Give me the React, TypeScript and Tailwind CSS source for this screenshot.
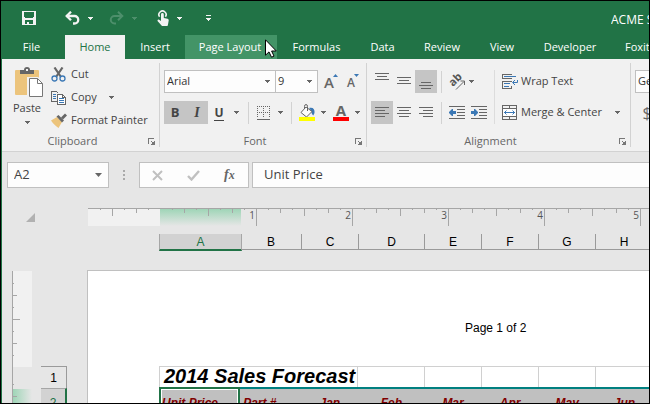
import React from 'react';
import clsx from 'clsx';

const tabs = [
  { name: 'File', width: 'w-[63px]' },
  { name: 'Home', width: 'w-[60px]' },
  { name: 'Insert', width: 'w-[60px]' },
  { name: 'Page Layout', width: 'w-[92px]' },
  { name: 'Formulas', width: 'w-[79px]' },
  { name: 'Data', width: 'w-[53px]' },
  { name: 'Review', width: 'w-[66px]' },
  { name: 'View', width: 'w-[54px]' },
  { name: 'Developer', width: 'w-[82px]' },
  { name: 'Foxit Reader', width: 'w-[94px]' },
];

const columns = [
  { letter: 'A', width: 'w-[81px]', heading: 'Unit Price' },
  { letter: 'B', width: 'w-[61px]', heading: 'Part #' },
  { letter: 'C', width: 'w-[57px]', heading: 'Jan' },
  { letter: 'D', width: 'w-[66px]', heading: 'Feb' },
  { letter: 'E', width: 'w-[57px]', heading: 'Mar' },
  { letter: 'F', width: 'w-[57px]', heading: 'Apr' },
  { letter: 'G', width: 'w-[57px]', heading: 'May' },
  { letter: 'H', width: 'w-[57px]', heading: 'Jun' },
];

const INCH = 96;

function Caret({ className = 'text-[#666]' }: { className?: string }) {
  return (
    <svg width="5" height="3" viewBox="0 0 5 3" className={clsx('shrink-0', className)} shapeRendering="crispEdges">
      <path d="M0 0h5v1H4v1H3v1H2V2H1V1H0z" fill="currentColor" />
    </svg>
  );
}

function Launcher() {
  return (
    <button aria-label="More options" className="absolute right-1 bottom-0.5">
      <svg width="7" height="7" viewBox="0 0 7 7" fill="none" stroke="#777" shapeRendering="crispEdges">
        <path d="M.5 6V.5H6M3 3l3 3" />
        <path d="M3 6.500h3.500V3" />
        <path d="M5 4h2v3H4z" fill="#777" stroke="none" />
      </svg>
    </button>
  );
}

function Group({ label, className, children }: { label: string; className?: string; children: React.ReactNode }) {
  return (
    <section
      aria-label={label}
      className={clsx('relative my-1 h-[84px] shrink-0 border-r border-[#d2d2d2]', className)}
    >
      {children}
      <div className="absolute right-4 bottom-0 left-0 h-3 text-center leading-3 text-[#666]">{label}</div>
      <Launcher />
    </section>
  );
}

function Separator() {
  return <div className="h-[22px] w-px shrink-0 bg-[#d2d2d2]" />;
}

function Combo({ label, value, className }: { label: string; value: string; className: string }) {
  return (
    <div className={clsx('relative h-[23px] shrink-0', className)}>
      <select
        aria-label={label}
        defaultValue={value}
        className="h-full w-full appearance-none border border-[#c0c0c0] bg-[#fdfdfd] pl-0.5 text-[#333]"
      >
        <option>{value}</option>
      </select>
      <Caret className="pointer-events-none absolute top-[10px] right-1.5 text-[#666]" />
    </div>
  );
}

function LinesIcon({ widths, align, top }: { widths: number[]; align: 'left' | 'center' | 'right'; top: number }) {
  return (
    <svg width="22" height="23" viewBox="0 0 22 23" shapeRendering="crispEdges" fill="#666">
      {widths.map((w, i) => (
        <rect
          key={i}
          x={align === 'left' ? 4 : align === 'right' ? 18 - w : 4 + (14 - w) / 2}
          y={top + i * 3}
          width={w}
          height="1"
        />
      ))}
    </svg>
  );
}

function IndentIcon({ increase }: { increase?: boolean }) {
  return (
    <svg width="16" height="13" viewBox="0 0 16 13" shapeRendering="crispEdges">
      <path d="M0 0h16v1H0zM8 3h8v1H8zM8 6h8v1H8zM8 9h8v1H8zM0 12h16v1H0z" fill="#666" />
      <path
        d={increase ? 'M0 5h3V3h1l3 3v1L4 10H3V8H0z' : 'M7 5H4V3H3L0 6v1l3 3h1V8h3z'}
        fill="#3b78b5"
        shapeRendering="auto"
      />
    </svg>
  );
}

function QuickAccess() {
  return (
    <div className="flex h-[34px] shrink-0 items-center bg-[#217346] pl-5 text-white">
      <button aria-label="Save">
        <svg width="14" height="14" viewBox="0 0 14 14" shapeRendering="crispEdges">
          <path
            fillRule="evenodd"
            fill="#f3f3f3"
            d="M0 0h14v14H0zM2 1v5h1v1h8V6h1V1zM3 9v4h2v-2h2v2h4V9z"
          />
        </svg>
      </button>
      <button aria-label="Undo" className="ml-[29px]">
        <svg width="15" height="14" viewBox="0 0 15 14" fill="none" stroke="#f3f3f3" strokeWidth="2.300">
          <path d="M1.500 5H9.500a3.600 3.600 0 0 1 0 7.500H8" />
          <path d="M6 .7 1.700 5 6 9.300" />
        </svg>
      </button>
      <button aria-label="Undo list" className="ml-2">
        <Caret className="text-[#f3f3f3]" />
      </button>
      <button aria-label="Redo" className="ml-4" disabled>
        <svg width="15" height="14" viewBox="0 0 15 14" fill="none" stroke="#4d8f6b" strokeWidth="2">
          <path d="M13.500 5H5.500a3.600 3.600 0 0 0 0 7.500h1.500" />
          <path d="M9 .7 13.300 5 9 9.300" />
        </svg>
      </button>
      <button aria-label="Redo list" className="ml-2" disabled>
        <Caret className="text-[#4d8f6b]" />
      </button>
      <button aria-label="Touch mode" className="ml-5">
        <svg width="12" height="16" viewBox="0 0 12 16">
          <path d="M2.600 6.800A3.600 3.600 0 1 1 8.400 6.800" fill="none" stroke="#f3f3f3" strokeWidth="1.600" />
          <path
            d="M4 4.500a1.400 1.400 0 0 1 2.800 0V8l3.700.8c.9.300 1.300.9 1.200 1.700L11 14.500 10.500 16H5L.7 11.200c-.6-1 .4-2 1.400-1.400L4 11z"
            fill="#f3f3f3"
          />
        </svg>
      </button>
      <button aria-label="Touch mode list" className="ml-2">
        <Caret className="text-[#f3f3f3]" />
      </button>
      <button aria-label="Customize toolbar" className="ml-6">
        <svg width="5" height="6" viewBox="0 0 5 6" fill="#f3f3f3" shapeRendering="crispEdges">
          <path d="M0 0h5v1H0zM0 3h5v1H4v1H3v1H2V5H1V4H0z" />
        </svg>
      </button>
      <span className="ml-auto w-[38px] shrink-0 overflow-hidden pt-1 text-xs whitespace-nowrap">ACME Sales</span>
    </div>
  );
}

function Cursor() {
  return (
    <svg className="absolute top-1 left-20 z-10" width="12" height="19" viewBox="0 0 12 19">
      <path d="M.5.8v15.400l3.500-3.300 2.500 5.300 2.500-1.100L6.600 12H11.300z" fill="#fff" stroke="#000" />
    </svg>
  );
}

function RibbonTabs() {
  return (
    <nav className="flex h-6 shrink-0 bg-[#217346] text-[11px] text-white">
      {tabs.map((tab) => (
        <button
          key={tab.name}
          className={clsx(
            'relative shrink-0 whitespace-nowrap',
            tab.width,
            tab.name === 'File' && 'pr-1',
            tab.name === 'Home' && 'bg-[#f1f1f1] text-[#217346]',
            tab.name === 'Page Layout' && 'bg-[#439467] pr-0.5',
            tab.name === 'Foxit Reader' && 'pl-3.5 text-left',
          )}
        >
          {tab.name}
          {tab.name === 'Page Layout' && <Cursor />}
        </button>
      ))}
    </nav>
  );
}

function ClipboardGroup() {
  return (
    <Group label="Clipboard" className="w-[158px]">
      <div className="flex pl-[9px]">
        <button className="flex w-8 flex-col items-center pt-1">
          <svg width="28" height="30" viewBox="0 0 28 30" className="ml-1 shrink-0">
            <rect x="0" y="3" width="24" height="25" rx="1" fill="#ecc47c" />
            <path d="M5 7V3h4a3 3 0 0 1 6 0h4v4z" fill="#666" />
            <rect x="11" y="2" width="2" height="2" fill="#f1f1f1" />
            <path d="M13.500 11.500h9l5 5v13h-14z" fill="#fff" stroke="#f1f1f1" strokeWidth="3" />
            <path d="M14.500 11.500h8l5 5v13h-13z" fill="#fff" stroke="#777" />
            <path d="M22.500 11.500v5h5" fill="none" stroke="#777" />
          </svg>
          <span className="leading-[22px]">Paste</span>
          <span className="mt-0.5">
            <Caret />
          </span>
        </button>
        <div className="ml-2 flex flex-col">
          <button className="flex h-[23px] items-center gap-1">
            <svg width="16" height="15" viewBox="0 0 16 15" fill="none">
              <path d="M3.500.5 10 10M11.500.5 5 10" stroke="#666" strokeWidth="2.200" />
              <circle cx="3.500" cy="11.500" r="2.500" stroke="#3b78b5" strokeWidth="1.300" />
              <circle cx="11.500" cy="11.500" r="2.500" stroke="#3b78b5" strokeWidth="1.300" />
            </svg>
            Cut
          </button>
          <button className="flex h-[23px] items-center gap-1">
            <svg width="16" height="14" viewBox="0 0 16 14" fill="none" shapeRendering="crispEdges">
              <path d="M6 10.500H.5V.5h5l2 2" stroke="#666" />
              <path d="M2 3.500h3M2 5.500h3M2 7.500h3" stroke="#3b78b5" />
              <path d="M6.500 3.500h5l3 3v7h-8z" fill="#fff" stroke="#666" />
              <path d="M11.500 3.500v3h3" stroke="#666" />
              <path d="M8 7.500h5M8 9.500h5M8 11.500h5" stroke="#3b78b5" />
            </svg>
            Copy
            <span className="ml-2">
              <Caret />
            </span>
          </button>
          <button className="flex h-[23px] items-center gap-1">
            <svg width="16" height="15" viewBox="0 0 16 15">
              <path d="M0 7.500 6 4l5 5-3.500 6C5 13 2 11 0 7.500z" fill="#ecc47c" />
              <path d="M5.500 3.500 7.500 2 13 7.500 11 9.500z" fill="#666" />
              <path d="M10 4.500 14 .5l2 2-4 4z" fill="#666" />
            </svg>
            Format Painter
          </button>
        </div>
      </div>
    </Group>
  );
}

function FontGroup() {
  return (
    <Group label="Font" className="w-[207px]">
      <div className="flex flex-col gap-2 pt-[7px] pl-1">
        <div className="flex items-center">
          <Combo label="Font name" value="Arial" className="w-[112px]" />
          <Combo label="Font size" value="9" className="-ml-px w-[43px]" />
          <button aria-label="Increase font size" className="ml-1.5 flex h-[23px] w-4 items-start text-[#666]">
            <span className="text-[15px] leading-6 font-semibold">A</span>
            <svg width="5" height="3" viewBox="0 0 5 3" className="mt-1 -ml-px shrink-0" fill="#3b78b5">
              <path d="M0 3h5L2.500 0z" />
            </svg>
          </button>
          <button aria-label="Decrease font size" className="ml-[7px] flex h-[23px] w-4 items-start text-[#666]">
            <span className="text-xs leading-[26px] font-semibold">A</span>
            <svg width="5" height="3" viewBox="0 0 5 3" className="mt-1 -ml-px shrink-0" fill="#3b78b5">
              <path d="M0 0h5L2.500 3z" />
            </svg>
          </button>
        </div>
        <div className="flex h-[23px] items-center">
          <button aria-label="Bold" className="h-full w-[22px] bg-[#c5c5c5] text-[13px] font-bold">
            B
          </button>
          <button
            aria-label="Italic"
            className="h-full w-[22px] bg-[#c5c5c5] font-['Liberation_Serif',serif] text-sm font-bold italic"
          >
            I
          </button>
          <button aria-label="Underline" className="h-full w-[22px] text-xs font-bold">
            <span className="inline-block border-b border-[#444] leading-[14px]">U</span>
          </button>
          <button aria-label="Underline style" className="ml-0.5 flex w-2 justify-center">
            <Caret />
          </button>
          <div className="ml-2">
            <Separator />
          </div>
          <button aria-label="Borders" className="ml-2">
            <svg width="13" height="14" viewBox="0 0 13 14" fill="none" stroke="#666" shapeRendering="crispEdges">
              <path d="M0 .5h13M0 6.500h13M.5 0v12M6.500 0v12M12.500 0v12" strokeDasharray="1 1" />
              <path d="M0 13.500h13" />
            </svg>
          </button>
          <button aria-label="Border style" className="ml-1 flex w-3 justify-center">
            <Caret />
          </button>
          <div className="ml-[5px]">
            <Separator />
          </div>
          <button aria-label="Fill color" className="ml-[7px]">
            <svg width="16" height="17" viewBox="0 0 16 17">
              <path d="M10 4c4-1 6 1 5.500 5l-1.200 2.500C12 10 13 7 10 4z" fill="#3b78b5" />
              <path d="M7 3 2 8.500 7.500 13 13 7.500z" fill="#fdfdfd" stroke="#666" />
              <path d="M5.500 5V2.500Q5.500.5 7 .5t1.500 2V7" fill="none" stroke="#666" />
              <rect y="13" width="16" height="4" fill="#ff0" />
            </svg>
          </button>
          <button aria-label="Fill color list" className="ml-0.5 flex w-3 justify-center">
            <Caret />
          </button>
          <button aria-label="Font color" className="ml-1 flex w-4 flex-col items-center">
            <span className="text-[15px] leading-[13px] font-bold text-[#666]">A</span>
            <span className="h-1 w-4 bg-[#f00]" />
          </button>
          <button aria-label="Font color list" className="ml-0.5 flex w-3 justify-center">
            <Caret />
          </button>
        </div>
      </div>
    </Group>
  );
}

function AlignmentGroup() {
  return (
    <Group label="Alignment" className="w-[264px]">
      <div className="flex pt-[7px] pl-1">
        <div className="flex w-[123px] flex-col gap-2">
          <div className="flex h-[23px] items-center">
            <button aria-label="Top align">
              <LinesIcon widths={[14, 10, 14]} align="center" top={3} />
            </button>
            <button aria-label="Middle align">
              <LinesIcon widths={[14, 10, 14]} align="center" top={7} />
            </button>
            <button aria-label="Bottom align" className="bg-[#c5c5c5]">
              <LinesIcon widths={[10, 14, 10]} align="center" top={12} />
            </button>
            <div className="ml-1">
              <Separator />
            </div>
            <button aria-label="Orientation" className="ml-1.5 flex items-center gap-1">
              <svg width="17" height="17" viewBox="0 0 17 17">
                <text
                  x="5"
                  y="14"
                  transform="rotate(-45 5 14)"
                  fontSize="11"
                  fontWeight="700"
                  fontFamily="Open Sans, sans-serif"
                  fill="#555"
                >
                  ab
                </text>
                <path d="M8 16.500 16 8.500M12.500 8h4v4" fill="none" stroke="#666" />
              </svg>
              <Caret />
            </button>
          </div>
          <div className="flex h-[23px] items-center">
            <button aria-label="Align left" className="bg-[#c5c5c5]">
              <LinesIcon widths={[14, 10, 14, 10]} align="left" top={6} />
            </button>
            <button aria-label="Center">
              <LinesIcon widths={[14, 10, 14, 10]} align="center" top={6} />
            </button>
            <button aria-label="Align right">
              <LinesIcon widths={[14, 10, 14, 10]} align="right" top={6} />
            </button>
            <div className="ml-1">
              <Separator />
            </div>
            <button aria-label="Decrease indent" className="ml-[7px]">
              <IndentIcon />
            </button>
            <button aria-label="Increase indent" className="ml-1.5">
              <IndentIcon increase />
            </button>
          </div>
        </div>
        <div className="h-[54px] w-px bg-[#dcdcdc]" />
        <div className="ml-[7px] flex flex-col gap-2">
          <button className="flex h-[23px] items-center gap-[3px]">
            <svg width="16" height="15" viewBox="0 0 16 15" fill="none" shapeRendering="crispEdges">
              <path d="M9.500 1V.5H.5v4h9V4" stroke="#666" />
              <path d="M2 2.500h12" stroke="#3b78b5" />
              <path d="M9.500 7.500H.5v7h9v-3" stroke="#666" />
              <path d="M2 9.500h6M2 12.500h5" stroke="#3b78b5" />
              <path d="M15.500 6v2.500H11M13 6l-2.500 2.500L13 11" stroke="#3b78b5" shapeRendering="auto" />
            </svg>
            Wrap Text
          </button>
          <button className="flex h-[23px] items-center gap-[3px] whitespace-nowrap">
            <svg width="16" height="15" viewBox="0 0 16 15" fill="none" shapeRendering="crispEdges">
              <path d="M.5.5h14v14H.5zM.5 3.500h14M.5 11.500h14M7.500 0v3M7.500 12v3" stroke="#666" />
              <path d="M1 4h13v7H1z" fill="#fff" />
              <path d="M2 7.500h11M4.500 5.500l-2 2 2 2M10.500 5.500l2 2-2 2" stroke="#3b78b5" shapeRendering="auto" />
            </svg>
            Merge &amp; Center
            <span className="ml-2.5">
              <Caret />
            </span>
          </button>
        </div>
      </div>
    </Group>
  );
}

function Ribbon() {
  return (
    <div className="flex h-[93px] shrink-0 overflow-hidden border-b border-[#d2d2d2] bg-[#f1f1f1] text-[11px] text-[#444]">
      <ClipboardGroup />
      <FontGroup />
      <AlignmentGroup />
      <Group label="Number" className="w-[140px]">
        <div className="flex flex-col gap-2 pt-[7px] pl-1">
          <Combo label="Number format" value="General" className="w-[120px]" />
          <button aria-label="Currency" className="h-[23px] w-6 text-base text-[#666]">
            $
          </button>
        </div>
      </Group>
    </div>
  );
}

function FormulaBar() {
  return (
    <div className="flex h-[26px] shrink-0 pl-[5px] text-[13px] text-[#444]">
      <div className="flex w-[102px] shrink-0 items-center border border-[#c0c0c0] bg-[#fdfdfd] pr-1.5">
        <input aria-label="Name box" defaultValue="A2" className="w-full min-w-0 bg-transparent pl-1.5" />
        <button aria-label="Name list">
          <svg width="7" height="4" viewBox="0 0 7 4" fill="#666">
            <path d="M0 0h7L3.500 4z" />
          </svg>
        </button>
      </div>
      <svg width="30" height="26" viewBox="0 0 30 26" fill="#aaa" className="shrink-0" shapeRendering="crispEdges">
        <path d="M14 8h2v2h-2zM14 12h2v2h-2zM14 16h2v2h-2z" />
      </svg>
      <div className="flex w-[110px] shrink-0 items-center border border-[#c0c0c0] bg-[#fdfdfd]">
        <button aria-label="Cancel" className="ml-3">
          <svg width="11" height="11" viewBox="0 0 11 11" stroke="#c0c0c0" strokeWidth="2">
            <path d="M1 1l9 9M10 1l-9 9" />
          </svg>
        </button>
        <button aria-label="Enter" className="ml-6">
          <svg width="13" height="11" viewBox="0 0 13 11" fill="none" stroke="#c0c0c0" strokeWidth="2.400">
            <path d="M1 6l3.500 3.500L12 1" />
          </svg>
        </button>
        <button
          aria-label="Insert function"
          className="ml-6 font-['Liberation_Serif',serif] text-sm leading-4 font-bold text-[#666] italic"
        >
          f<span className="text-xs">x</span>
        </button>
      </div>
      <input
        aria-label="Formula"
        defaultValue="Unit Price"
        className="ml-[3px] min-w-0 flex-1 border-y border-l border-[#c0c0c0] bg-[#fdfdfd] pl-[11px]"
      />
    </div>
  );
}

function HorizontalRuler() {
  // eighth-inch ticks, starting three quarters of an inch before the margin
  const ticks = Array.from({ length: 150 }, (_, i) => i - 5);
  return (
    <svg className="h-[19px] min-w-0 flex-1" shapeRendering="crispEdges">
      <defs>
        <linearGradient id="col-highlight" x1="0" y1="0" x2="0" y2="1">
          <stop offset="0" stopColor="#9fd5b7" />
          <stop offset="1" stopColor="#e6e6e6" />
        </linearGradient>
      </defs>
      <rect x="0" y="1" width="72" height="17" fill="#f1f1f1" />
      <rect x="72" y="1" width="81" height="17" fill="url(#col-highlight)" />
      <rect x="0" y="0" width="100%" height="1" fill="#a6a6a6" />
      {ticks.map((n) => {
        if (n === 0) return null;
        const height = n % 8 === 0 ? 17 : n % 4 === 0 ? 7 : n % 2 === 0 ? 4 : 1;
        return <rect key={n} x={72 + n * 12} y="1" width="1" height={height} fill="#a6a6a6" />;
      })}
      {[1, 2, 3, 4, 5, 6, 7, 8].map((n) => (
        <text
          key={n}
          x={71 + n * INCH}
          y="11"
          textAnchor="end"
          fontSize="10"
          fontFamily="Open Sans, sans-serif"
          fill="#555"
        >
          {n}
        </text>
      ))}
    </svg>
  );
}

function VerticalRuler() {
  return (
    <svg width="20" height="100%" className="shrink-0" shapeRendering="crispEdges">
      <defs>
        <linearGradient id="row-highlight">
          <stop offset="0" stopColor="#9fd5b7" />
          <stop offset="1" stopColor="#e6e6e6" />
        </linearGradient>
      </defs>
      <rect x="1" y="1" width="19" height="96" fill="#f1f1f1" />
      <rect x="1" y="119" width="19" height="22" fill="url(#row-highlight)" />
      <rect x="0" y="1" width="1" height="100%" fill="#a6a6a6" />
      <path
        d="M1 13.500h1M1 25.500h4M1 37.500h1M1 49.500h7M1 61.500h1M1 73.500h4M1 85.500h1M1 114.500h1M1 126.500h4"
        stroke="#a6a6a6"
      />
    </svg>
  );
}

function ColumnHeaders() {
  return (
    <div className="ml-[157px] flex h-[17px] shrink-0 overflow-hidden font-['Liberation_Sans',sans-serif] text-xs text-black">
      {columns.map((col) => (
        <div
          key={col.letter}
          className={clsx(
            'shrink-0 border-r text-center leading-4',
            col.width,
            col.letter === 'A'
              ? '-mr-px box-content h-[15px] border-b-2 border-l border-x-[#a6a6a6] border-b-[#217346] bg-[#d2d2d2] text-[#217346]'
              : 'h-4 border-b border-[#9a9a9a]',
          )}
        >
          {col.letter}
        </div>
      ))}
    </div>
  );
}

function Grid() {
  return (
    <table className="w-[494px] table-fixed border-separate border-spacing-0">
      <colgroup>
        {columns.map((col) => (
          <col key={col.letter} className={col.width} />
        ))}
      </colgroup>
      <tbody>
        <tr className="h-[21px]">
          <td
            colSpan={3}
            className="border-t border-r border-l border-[#d0d0d0] p-0 pl-1 align-top text-xl leading-[18px] font-bold whitespace-nowrap italic"
          >
            2014 Sales Forecast
          </td>
          {columns.slice(3).map((col) => (
            <td key={col.letter} className="border-t border-r border-[#d0d0d0] p-0" />
          ))}
        </tr>
        <tr className="text-xs font-bold text-[#800000] italic">
          {columns.map((col, i) => (
            <td
              key={col.letter}
              className={clsx(
                'h-6 border-t-2 bg-[#c0c0c0] p-0 pt-1.5 align-top leading-4 whitespace-nowrap',
                i === 0 && 'border-2 border-[#217346] pl-px inset-ring inset-ring-white',
                i === 1 && 'border-[#008080] pl-[3px]',
                i > 1 && 'border-[#008080] text-center',
              )}
            >
              {col.heading}
            </td>
          ))}
        </tr>
      </tbody>
    </table>
  );
}

function Sheet() {
  return (
    <div className="mt-5 flex min-h-0 flex-1 flex-col overflow-hidden">
      <div className="flex shrink-0">
        <button aria-label="Select all" className="w-[86px] shrink-0 pl-6">
          <svg width="9" height="9" viewBox="0 0 9 9" fill="#b1b1b1">
            <path d="M9 0v9H0z" />
          </svg>
        </button>
        <HorizontalRuler />
      </div>
      <div className="h-[7px] shrink-0" />
      <ColumnHeaders />
      <div className="mt-[19px] flex min-h-0 flex-1 font-['Liberation_Sans',sans-serif] text-black">
        <div className="w-2.5 shrink-0" />
        <VerticalRuler />
        <div className="mt-24 ml-[9px] w-[26px] shrink-0 text-center text-xs">
          <div className="h-[22px] border-t border-r border-[#9a9a9a] leading-[22px]">1</div>
          <div className="h-[22px] border-t border-r-2 border-t-[#a6a6a6] border-r-[#217346] bg-[#d2d2d2] leading-7 text-[#217346]">
            2
          </div>
        </div>
        <div className="ml-5 min-w-0 flex-1 overflow-hidden border-t border-l border-[#c0c0c0] bg-white">
          <p className="h-[95px] pt-[49px] pl-[377px] text-xs leading-4">Page 1 of 2</p>
          <div className="pl-[71px]">
            <Grid />
          </div>
        </div>
      </div>
    </div>
  );
}

export default function App() {
  return (
    <div className="flex h-screen flex-col overflow-hidden border border-black bg-[#e6e6e6] font-['Open_Sans','Noto_Sans',sans-serif]">
      <div className="flex min-h-0 flex-1 flex-col border-l border-[#217346]">
        <QuickAccess />
        <RibbonTabs />
        <Ribbon />
        <div className="h-2.5 shrink-0" />
        <FormulaBar />
        <Sheet />
      </div>
    </div>
  );
}
